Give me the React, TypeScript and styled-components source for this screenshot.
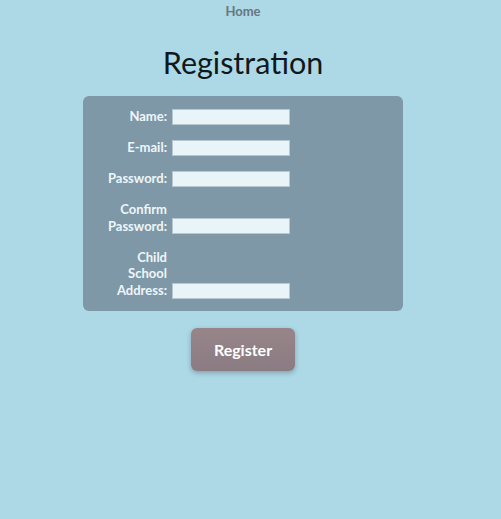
import React from "react";
import styled, { createGlobalStyle } from "styled-components";

const GlobalStyle = createGlobalStyle`
  html, body {
    margin: 0;
    padding: 0;
    background: #add8e6;
    font-family: Lato, "Open Sans", sans-serif;
  }
`;

const Page = styled.div`
  width: 486px;
  min-height: 519px;
  display: flex;
  flex-direction: column;
  align-items: center;
`;

const NavLink = styled.a`
  margin-top: 3px;
  font-size: 13px;
  font-weight: 700;
  color: #66777d;
  text-decoration: none;
  line-height: 16px;
`;

const Title = styled.h1`
  margin: 24px 0 15px;
  font-size: 30.5px;
  font-weight: 400;
  color: #10181c;
  line-height: 38px;
`;

const FormCard = styled.form`
  width: 320px;
  box-sizing: border-box;
  background: #7f98a8;
  border-radius: 6px;
  padding: 12px 20px 12px;
  display: flex;
  flex-direction: column;
  gap: 14.3px;
`;

const Row = styled.div`
  display: flex;
  align-items: flex-end;
  gap: 5px;
`;

const Label = styled.label`
  width: 64px;
  text-align: right;
  font-size: 13px;
  font-weight: 700;
  line-height: 16.7px;
  color: #eef6fa;
`;

const Input = styled.input`
  width: 118px;
  height: 16px;
  box-sizing: border-box;
  border: 1px solid #b8c8d0;
  background: #e8f4f8;
  padding: 0 2px;
  margin: 0;
`;

const RegisterButton = styled.button`
  margin-top: 17px;
  width: 104px;
  height: 43px;
  border: none;
  border-radius: 6px;
  background: linear-gradient(#978589, #8a7c83);
  box-shadow: 0 2px 5px rgba(0, 0, 0, 0.25);
  color: #ffffff;
  font-family: Lato, "Open Sans", sans-serif;
  font-size: 16px;
  font-weight: 700;
`;

const fields = [
  { id: "name", label: "Name:", type: "text" },
  { id: "email", label: "E-mail:", type: "email" },
  { id: "password", label: "Password:", type: "password" },
  { id: "confirm", label: "Confirm Password:", type: "password" },
  { id: "school", label: "Child School Address:", type: "text" },
];

export default function App() {
  return (
    <>
      <GlobalStyle />
      <Page>
        <NavLink href="#">Home</NavLink>
        <Title>Registration</Title>
        <FormCard onSubmit={(e) => e.preventDefault()}>
          {fields.map((f) => (
            <Row key={f.id}>
              <Label htmlFor={f.id}>{f.label}</Label>
              <Input id={f.id} type={f.type} />
            </Row>
          ))}
        </FormCard>
        <RegisterButton type="button">Register</RegisterButton>
      </Page>
    </>
  );
}
